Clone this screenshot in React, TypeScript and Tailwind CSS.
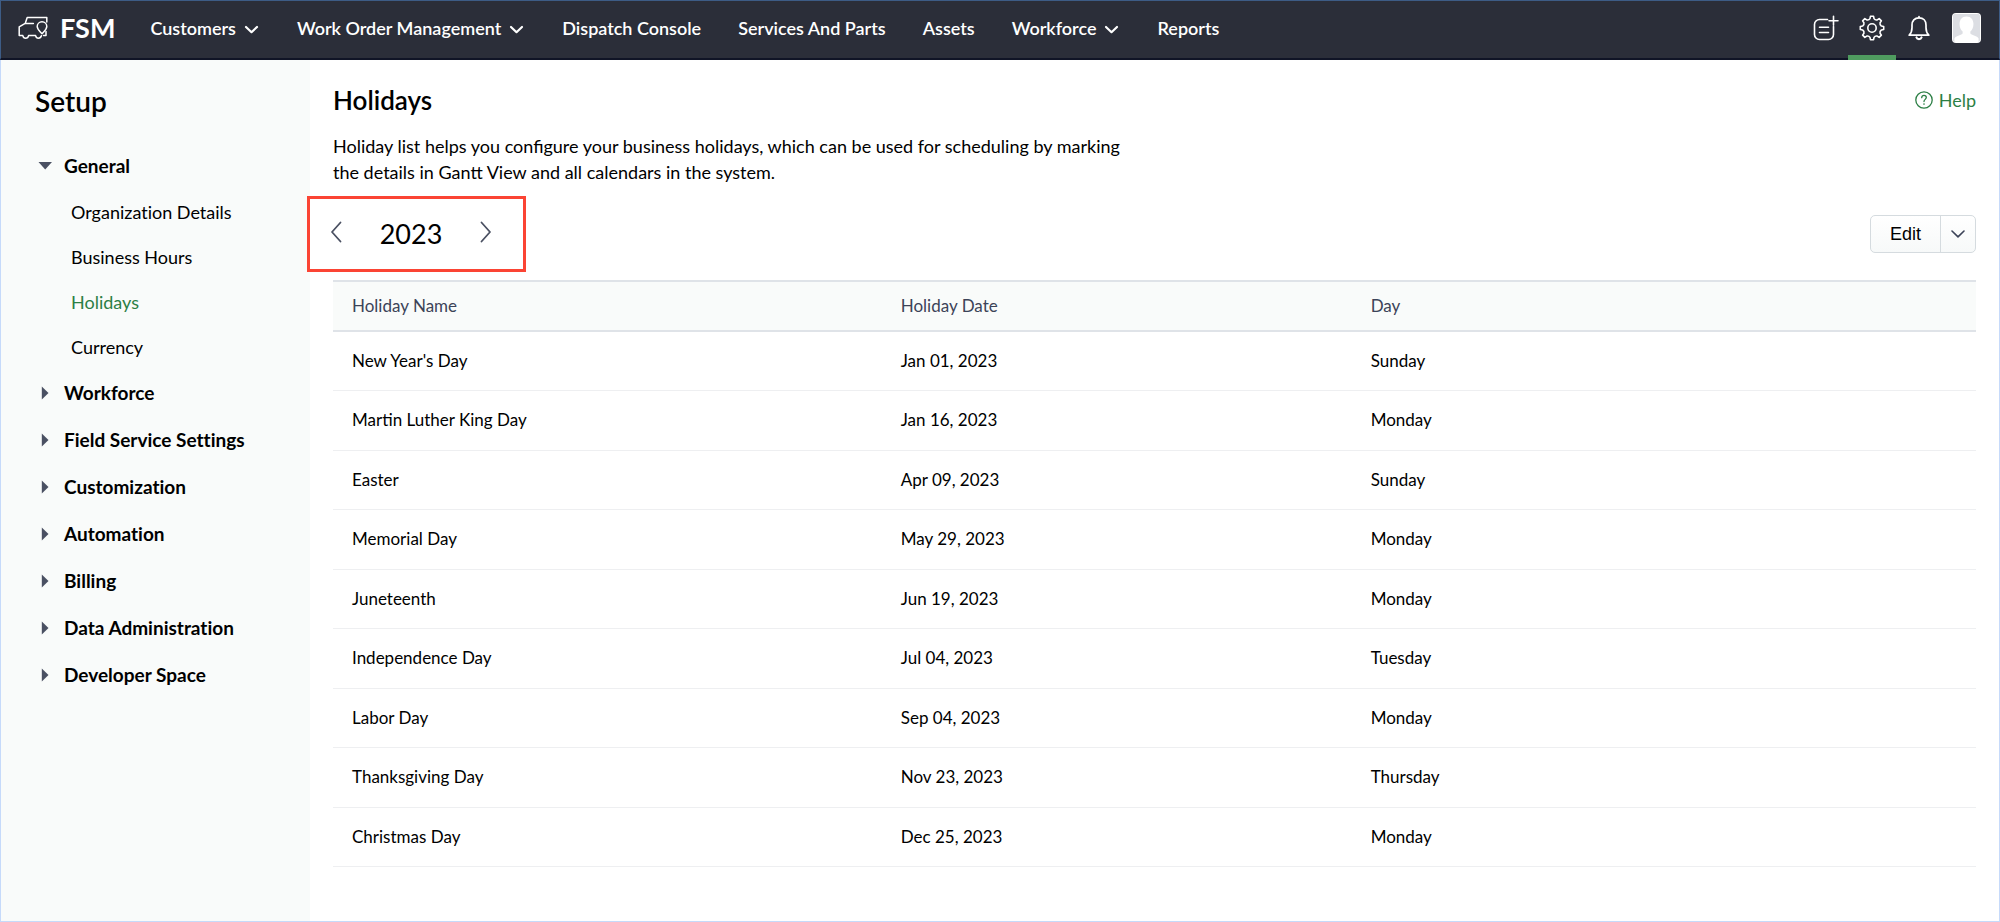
import React from "react";

const navItems = [
  { label: "Customers", menu: true },
  { label: "Work Order Management", menu: true },
  { label: "Dispatch Console", menu: false },
  { label: "Services And Parts", menu: false },
  { label: "Assets", menu: false },
  { label: "Workforce", menu: true },
  { label: "Reports", menu: false },
];

const generalItems = ["Organization Details", "Business Hours", "Holidays", "Currency"];

const groups = [
  "Workforce",
  "Field Service Settings",
  "Customization",
  "Automation",
  "Billing",
  "Data Administration",
  "Developer Space",
];

const holidays = [
  ["New Year's Day", "Jan 01, 2023", "Sunday"],
  ["Martin Luther King Day", "Jan 16, 2023", "Monday"],
  ["Easter", "Apr 09, 2023", "Sunday"],
  ["Memorial Day", "May 29, 2023", "Monday"],
  ["Juneteenth", "Jun 19, 2023", "Monday"],
  ["Independence Day", "Jul 04, 2023", "Tuesday"],
  ["Labor Day", "Sep 04, 2023", "Monday"],
  ["Thanksgiving Day", "Nov 23, 2023", "Thursday"],
  ["Christmas Day", "Dec 25, 2023", "Monday"],
];

function gearPath(teeth: number, outer: number, inner: number) {
  const step = (Math.PI * 2) / teeth;
  const at = (r: number, a: number) =>
    `${(13 + r * Math.sin(a)).toFixed(2)} ${(13 - r * Math.cos(a)).toFixed(2)}`;
  let d = "";
  for (let i = 0; i < teeth; i++) {
    const a = i * step;
    d += `${i ? "L" : "M"}${at(outer, a - step * 0.17)}L${at(outer, a + step * 0.17)}`;
    d += `L${at(inner + 0.6, a + step * 0.27)}Q${at(inner - 0.8, a + step * 0.5)} ${at(inner + 0.6, a + step * 0.73)}`;
  }
  return d + "Z";
}

function VanLogo() {
  return (
    <svg width="30" height="24" viewBox="0 0 30 24" fill="none" stroke="currentColor" strokeWidth="1.5" strokeLinejoin="round" strokeLinecap="round" aria-hidden="true">
      <path d="M28.8 6V1.500H9.200L7.200 7.400L1.200 10.800V19.600H4.800C5.200 21.400 6.200 22.200 7.600 22.200C9 22.200 10.200 21.400 10.600 19.600H17.600C18 21.400 19 22.200 20.400 22.200C21.800 22.200 23 21.400 23.400 19.800" />
      <path d="M7.400 7.400H15.400" />
      <path d="M24 17.800C21.400 14.800 19.200 13.200 19.200 10.600A4.800 4.800 0 0 1 28.800 10.600C28.800 13.200 26.600 14.800 24 17.800Z" />
      <path d="M28 15.600V19.600H25.500" />
    </svg>
  );
}

function NavChevron() {
  return (
    <svg width="16" height="16" viewBox="0 0 16 16" fill="none" stroke="currentColor" strokeWidth="2.200" strokeLinecap="round" strokeLinejoin="round" aria-hidden="true">
      <path d="M2 7L7.500 12.200L13 7" />
    </svg>
  );
}

function Header() {
  return (
    <header className="flex h-[60px] items-center border border-b-2 border-[#3d5c86] border-b-[#101426] bg-[#2b2e39] pr-[18px] pb-[3px] pl-[17px] text-white">
      <a href="#home" className="flex items-center gap-3">
        <VanLogo />
        <span className="text-[27px] leading-8 font-bold">FSM</span>
      </a>
      <nav className="ml-[35px] flex items-center gap-[37px] text-[18px] leading-6 font-semibold">
        {navItems.map((item) =>
          item.menu ? (
            <button key={item.label} type="button" className="flex items-center gap-2 whitespace-nowrap">
              {item.label}
              <NavChevron />
            </button>
          ) : (
            <a key={item.label} href="#nav" className="whitespace-nowrap">
              {item.label}
            </a>
          ),
        )}
      </nav>
      <div className="ml-auto flex h-full items-center">
        <button type="button" aria-label="Quick create" className="mr-[9px]">
          <svg width="26" height="26" viewBox="0 0 26 26" fill="none" stroke="currentColor" strokeWidth="1.600" strokeLinecap="round">
            <path d="M14.500 4.500H6.500A5 5 0 0 0 1.500 9.500V19.500A5 5 0 0 0 6.500 24.500H15.500A5 5 0 0 0 20.500 19.500V11.500" />
            <path d="M6.500 12.200H15.500M6.500 17.500H15.500M20.500 1.200V10.200M16 5.700H25" />
          </svg>
        </button>
        <button type="button" aria-label="Setup" className="-mb-[5px] flex h-[59px] w-12 items-center justify-center self-start border-b-[5px] border-[#4f9c5f]">
          <svg width="26" height="26" viewBox="0 0 26 26" fill="none" stroke="currentColor" strokeWidth="1.600" strokeLinejoin="round">
            <path d={gearPath(8, 11.8, 9)} />
            <circle cx="13" cy="13" r="4.200" />
          </svg>
        </button>
        <button type="button" aria-label="Notifications" className="ml-3">
          <svg width="22" height="26" viewBox="0 0 22 26" fill="none" stroke="currentColor" strokeWidth="1.700" strokeLinejoin="round" strokeLinecap="round">
            <path d="M1.200 20.200C3.800 17.800 4 15.800 4 12.500V10C4 6 6.500 2.800 11 2.800S18 6 18 10V12.500C18 15.800 18.200 17.800 20.800 20.200Z" />
            <path d="M11 2.500V1.500" />
            <path d="M8.500 22.500A2.600 2.200 0 0 0 13.500 22.500" strokeWidth="2.200" />
          </svg>
        </button>
        <button type="button" aria-label="Profile" className="ml-[22px] overflow-hidden rounded-[4px] bg-white">
          <svg width="29" height="30" viewBox="0 0 30 30" preserveAspectRatio="none">
            <rect x="1" y="1" width="28" height="28" rx="2" fill="#dcdee3" />
            <path d="M15 3.500C19.800 3.500 22.200 7 22.200 11C22.200 14.500 20.800 17 19 18.500V20.500C21 22.500 26 22.500 27.500 25.500V29H2.500V25.500C4 22.500 9 22.500 11 20.500V18.500C9.200 17 7.800 14.500 7.800 11C7.800 7 10.200 3.500 15 3.500Z" fill="#fff" />
          </svg>
        </button>
      </div>
    </header>
  );
}

function Sidebar() {
  return (
    <aside className="w-[309px] shrink-0 bg-[#f9fbfa] pt-[23px] text-black [font-variant-ligatures:no-common-ligatures]">
      <h1 className="pl-[34px] text-[28px] leading-9 font-semibold">Setup</h1>
      <ul className="mt-[23px]">
        <li>
          <button type="button" aria-expanded="true" className="flex h-[47px] w-full items-center gap-[11px] pl-9 text-left text-[19px] leading-6 font-bold">
            <svg width="16" height="16" viewBox="0 0 16 16" fill="#4a5062" aria-hidden="true">
              <path d="M1.500 4H15L8.200 11.500Z" />
            </svg>
            General
          </button>
          <ul>
            {generalItems.map((label) => (
              <li key={label}>
                <a
                  href="#section"
                  className={
                    label === "Holidays"
                      ? "flex h-[45px] items-center pl-[70px] text-[18px] leading-6 text-[#2c7f45]"
                      : "flex h-[45px] items-center pl-[70px] text-[18px] leading-6"
                  }
                >
                  {label}
                </a>
              </li>
            ))}
          </ul>
        </li>
        {groups.map((label) => (
          <li key={label}>
            <button type="button" aria-expanded="false" className="flex h-[47px] w-full items-center gap-[11px] pl-9 text-left text-[19px] leading-6 font-bold">
              <svg width="16" height="16" viewBox="0 0 16 16" fill="#4a5062" aria-hidden="true">
                <path d="M4.800 1.500L11.500 8L4.800 14.500Z" />
              </svg>
              {label}
            </button>
          </li>
        ))}
      </ul>
    </aside>
  );
}

function YearSwitcher() {
  return (
    <div className="-ml-[26px] flex h-[76px] w-[219px] items-center justify-between border-[3px] border-[#fb4434] pr-[31px] pl-5">
      <button type="button" aria-label="Previous year" className="-mt-1 text-[#4a5062]">
        <svg width="12" height="22" viewBox="0 0 12 22" fill="none" stroke="currentColor" strokeWidth="1.800" strokeLinecap="round" strokeLinejoin="round">
          <path d="M10.500 1.500L2 11L10.500 20.500" />
        </svg>
      </button>
      <span className="text-[27px] leading-8 text-black">2023</span>
      <button type="button" aria-label="Next year" className="-mt-1 text-[#4a5062]">
        <svg width="12" height="22" viewBox="0 0 12 22" fill="none" stroke="currentColor" strokeWidth="1.800" strokeLinecap="round" strokeLinejoin="round">
          <path d="M1.500 1.500L10 11L1.500 20.500" />
        </svg>
      </button>
    </div>
  );
}

function HolidayTable() {
  return (
    <table className="mt-2 w-full table-fixed border-collapse text-left text-[17px] leading-6 text-black">
      <thead>
        <tr className="h-[50px] border-y-2 border-[#dfe3e8] bg-[#f9fbfa] text-[#3c4358]">
          <th scope="col" className="w-[33.4%] px-[19px] py-0 font-normal">Holiday Name</th>
          <th scope="col" className="w-[28.6%] px-[19px] py-0 font-normal">Holiday Date</th>
          <th scope="col" className="px-[19px] py-0 font-normal">Day</th>
        </tr>
      </thead>
      <tbody>
        {holidays.map(([name, date, day]) => (
          <tr key={name} className="border-b border-[#eeeff1] odd:h-[59px] even:h-[60px]">
            <td className="px-[19px] py-0">{name}</td>
            <td className="px-[19px] py-0">{date}</td>
            <td className="px-[19px] py-0">{day}</td>
          </tr>
        ))}
      </tbody>
    </table>
  );
}

export default function App() {
  return (
    <div className="flex min-h-screen flex-col bg-white font-['Lato',sans-serif]">
      <Header />
      <div className="flex grow border-x border-b border-[#c6dafa]">
        <Sidebar />
        <main className="min-w-0 grow pt-6 pr-[23px] pl-[23px]">
          <div className="flex items-center justify-between">
            <h2 className="text-[26px] leading-8 font-semibold text-black">Holidays</h2>
            <a href="#help" className="flex items-center gap-1.5 text-[18px] leading-6 text-[#2c7f45]">
              <svg width="18" height="18" viewBox="0 0 18 18" fill="none" stroke="currentColor" strokeWidth="1.300" strokeLinecap="round" strokeLinejoin="round" aria-hidden="true">
                <circle cx="9" cy="9" r="8.200" />
                <path d="M6.700 6.700C6.700 5.200 7.700 4.400 9 4.400S11.300 5.300 11.300 6.600C11.300 8.300 9 8.500 9 10.500" />
                <path d="M9 13V13.100" strokeWidth="1.600" />
              </svg>
              Help
            </a>
          </div>
          <p className="mt-[17px] max-w-[800px] text-[18px] leading-[26px] text-black">
            Holiday list helps you configure your business holidays, which can be used for scheduling by marking the
            details in Gantt View and all calendars in the system.
          </p>
          <div className="mt-[11px] flex items-center justify-between">
            <YearSwitcher />
            <div className="flex h-[38px] rounded-[5px] border border-[#d5dbdf] bg-linear-to-b from-white to-[#f7f9f9]">
              <button type="button" className="w-[69px] font-['Liberation_Sans',sans-serif] text-[18px] leading-6 text-black">
                Edit
              </button>
              <button type="button" aria-label="More actions" className="flex w-[35px] items-center justify-center border-l border-[#d5dbdf] text-[#3c4358]">
                <svg width="14" height="8" viewBox="0 0 14 8" fill="none" stroke="currentColor" strokeWidth="1.600" strokeLinecap="round" strokeLinejoin="round">
                  <path d="M1 1L7 6.800L13 1" />
                </svg>
              </button>
            </div>
          </div>
          <HolidayTable />
        </main>
      </div>
    </div>
  );
}
